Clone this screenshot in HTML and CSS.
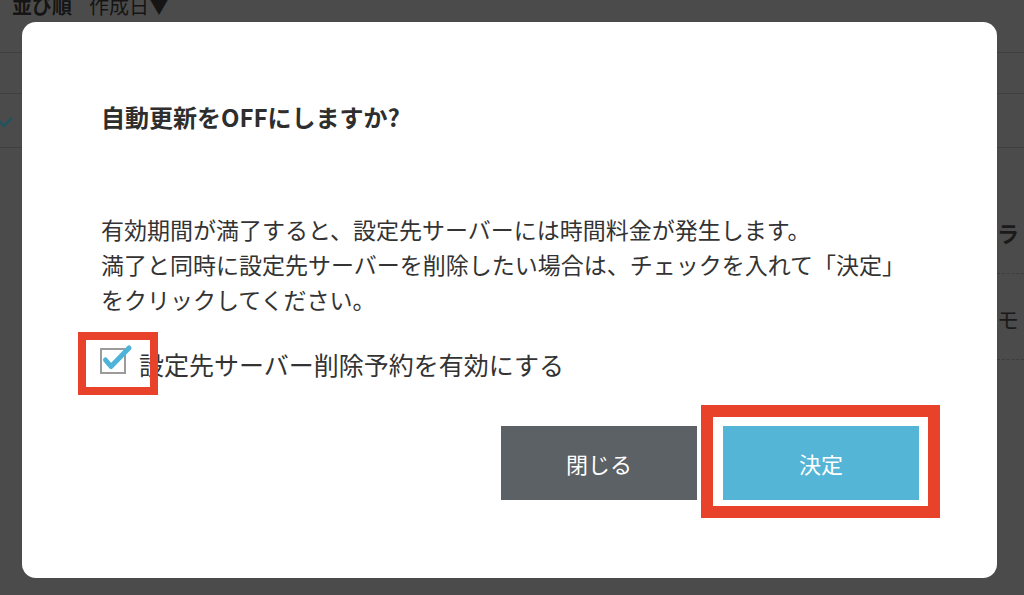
FILE: index.html
```html
<!DOCTYPE html>
<html lang="ja">
<head>
<meta charset="utf-8">
<title>自動更新</title>
<link rel="stylesheet" href="styles.css">
</head>
<body>
<div class="page">
  <div class="sortbar">
    <span class="sort-label">並び順</span>
    <span class="sort-value">作成日▼</span>
  </div>
  <div class="list-row"></div>
  <div class="list-row list-row-tall">
    <svg class="row-check" width="16" height="12" viewBox="0 0 16 12"><polyline points="1,3 7,9 15,1" fill="none" stroke="#23535e" stroke-width="2.5"/></svg>
  </div>
  <div class="detail">
    <div class="detail-main"></div>
    <div class="detail-side">
      <div class="side-cell side-cell-a"><span class="side-head">ラ</span></div>
      <div class="side-cell side-cell-b"><span class="side-text">モ</span></div>
    </div>
  </div>
</div>

<div class="modal">
  <h2 class="modal-title">自動更新をOFFにしますか?</h2>
  <p class="modal-desc">有効期間が満了すると、設定先サーバーには時間料金が発生します。<br>満了と同時に設定先サーバーを削除したい場合は、チェックを入れて「決定」<br>をクリックしてください。</p>
  <label class="check-row">
    <span class="check-mark">
      <svg class="check-svg" width="26" height="32" viewBox="0 0 26 32">
        <rect x="1" y="4" width="24" height="24" fill="#fff" stroke="#9b9b9b" stroke-width="2"/>
        <polyline points="5.5,15 11,21.5 29,3" fill="none" stroke="#4db3d8" stroke-width="5" stroke-linecap="round" stroke-linejoin="round"/>
      </svg>
    </span>
    <span class="check-label">設定先サーバー削除予約を有効にする</span>
  </label>
  <div class="actions">
    <button class="btn btn-close" type="button">閉じる</button>
    <button class="btn btn-ok" type="button">決定</button>
  </div>
</div>
</body>
</html>
```
FILE: styles.css
```css
html, body {
  margin: 0;
  padding: 0;
}
body {
  width: 1024px;
  height: 595px;
  overflow: hidden;
  background: #4b4b4b;
  font-family: "Noto Sans CJK JP", "Noto Sans", sans-serif;
  position: relative;
}

/* underlying page (dimmed) */
.page {
  width: 1024px;
}
.sortbar {
  height: 53px;
  box-sizing: border-box;
  border-bottom: 1px solid #404040;
  padding: 0 12px;
  display: flex;
  align-items: flex-start;
  gap: 17px;
  font-size: 20px;
  line-height: 20px;
  color: #151515;
}
.sort-label,
.sort-value {
  margin-top: -4px;
}
.sort-label {
  font-weight: bold;
}
.list-row {
  height: 41px;
  box-sizing: border-box;
  border-bottom: 1px solid #404040;
}
.list-row-tall {
  height: 54px;
  display: flex;
  align-items: center;
}
.row-check {
  margin-left: -3px;
  margin-top: 4px;
}
.detail {
  display: grid;
  grid-template-columns: 1fr 27px;
}
.detail-side {
  font-size: 22px;
  line-height: 22px;
  color: #1a1a1a;
}
.side-cell {
  box-sizing: border-box;
  border-bottom: 1px dashed #3d3d3d;
}
.side-cell-a {
  height: 126px;
  padding-top: 73px;
}
.side-cell-b {
  height: 86px;
  padding-top: 33px;
}
.side-head {
  font-weight: bold;
}

/* modal */
.modal {
  position: absolute;
  left: 22px;
  top: 22px;
  width: 975px;
  height: 556px;
  box-sizing: border-box;
  background: #fff;
  border-radius: 14px;
  padding: 78px 78px 0 79px;
  color: #333;
}
.modal-title {
  margin: 0;
  font-size: 24px;
  line-height: 34px;
  font-weight: bold;
  color: #2e2e2e;
}
.modal-desc {
  margin: 78px 0 0;
  font-size: 23px;
  line-height: 35px;
  color: #333;
}
.check-row {
  margin-top: 29px;
  height: 36px;
  display: flex;
  align-items: center;
}
.check-mark {
  position: relative;
  display: block;
  width: 26px;
  height: 32px;
  margin-left: -1px;
  margin-top: -7px;
}
.check-svg {
  display: block;
  overflow: visible;
}
.check-mark::after {
  content: "";
  position: absolute;
  left: -22px;
  top: -13px;
  width: 80px;
  height: 63px;
  box-sizing: border-box;
  border: 8px solid #e9422a;
}
.check-label {
  margin-left: 13px;
  font-size: 25px;
  line-height: 36px;
  color: #333;
}
.actions {
  margin-top: 44px;
  display: flex;
  justify-content: flex-end;
  gap: 26px;
}
.btn {
  width: 196px;
  height: 74px;
  border: none;
  font-family: inherit;
  font-size: 22px;
  color: #fff;
  padding: 0;
  cursor: pointer;
}
.btn-close {
  background: #5b6165;
}
.btn-ok {
  background: #55b5d6;
  position: relative;
}
.btn-ok::after {
  content: "";
  position: absolute;
  left: -22px;
  top: -21px;
  right: -21px;
  bottom: -18px;
  border: 12px solid #e9422a;
}
```
